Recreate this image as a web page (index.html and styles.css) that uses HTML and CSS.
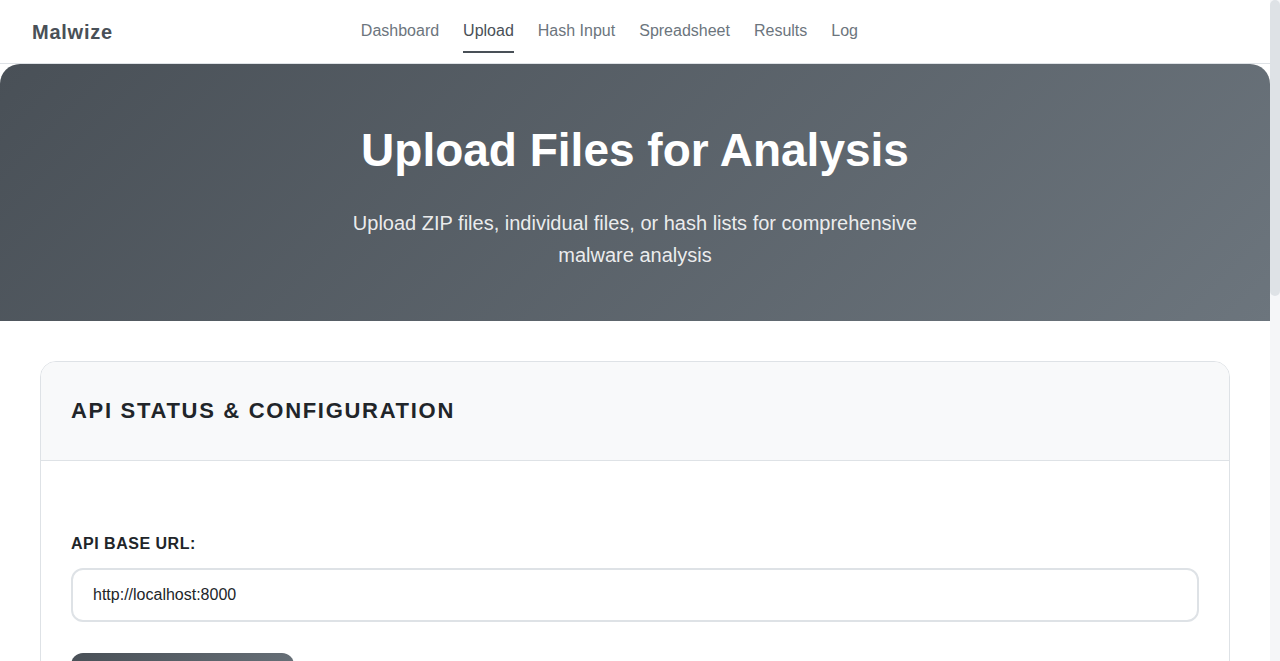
FILE: index.html
```html
<!DOCTYPE html>
<html lang="en">
<head>
<meta charset="utf-8">
<title>Malwize - Upload</title>
<link rel="stylesheet" href="styles.css">
</head>
<body>
<div class="page">
<header class="navbar">
  <div class="brand">Malwize</div>
  <nav class="nav">
    <a class="nav-link" href="#">Dashboard</a>
    <a class="nav-link active" href="#">Upload</a>
    <a class="nav-link" href="#">Hash Input</a>
    <a class="nav-link" href="#">Spreadsheet</a>
    <a class="nav-link" href="#">Results</a>
    <a class="nav-link" href="#">Log</a>
  </nav>
</header>
<section class="hero">
  <h1 class="hero-title">Upload Files for Analysis</h1>
  <p class="hero-sub">Upload ZIP files, individual files, or hash lists for comprehensive malware analysis</p>
</section>
<main class="content">
  <section class="card">
    <div class="card-header">
      <h2 class="card-title">API STATUS &amp; CONFIGURATION</h2>
    </div>
    <div class="card-body">
      <label class="field-label" for="api">API BASE URL:</label>
      <input id="api" class="field-input" type="text" value="http://localhost:8000">
      <button class="btn">Check API Status</button>
    </div>
  </section>
  <section class="card">
    <div class="card-header">
      <h2 class="card-title">UPLOAD FILES</h2>
    </div>
    <div class="card-body">
      <div class="dropzone">Drag &amp; drop files here, or click to browse</div>
    </div>
  </section>
</main>
</div>
<div class="scrollbar" aria-hidden="true"><div class="scrollbar-thumb"></div></div>
</body>
</html>
```
FILE: styles.css
```css
html, body { margin: 0; padding: 0; }
body {
  font-family: "Liberation Sans", Arial, sans-serif;
  color: #212529;
  background: #ffffff;
  display: flex;
  align-items: flex-start;
}

.page {
  flex: 1;
  min-width: 0;
}
.scrollbar {
  flex: 0 0 10px;
  width: 10px;
  height: 100vh;
  background: #f5f6f8;
}
.scrollbar-thumb {
  height: 296px;
  background: #dee2e6;
  border-radius: 5px;
}

.navbar {
  height: 63px;
  border-bottom: 1px solid #dee2e6;
  display: flex;
  align-items: flex-start;
  padding: 0 32px;
}
.brand {
  font-size: 20px;
  font-weight: 700;
  letter-spacing: 0.75px;
  color: #495057;
  padding-top: 21px;
  line-height: 23px;
}
.nav {
  display: flex;
  gap: 24px;
  margin-left: 248px;
}
.nav-link {
  display: block;
  font-size: 16px;
  line-height: 18px;
  color: #6c757d;
  text-decoration: none;
  padding: 22px 0 11px;
  border-bottom: 2px solid transparent;
}
.nav-link.active {
  color: #495057;
  border-bottom-color: #495057;
}

.hero {
  background: linear-gradient(135deg, #495057 0%, #6c757d 100%);
  border-radius: 20px 20px 0 0;
  padding: 59px 20px 50px;
  text-align: center;
  color: #ffffff;
}
.hero-title {
  margin: 0 0 29px;
  font-size: 46px;
  line-height: 55px;
  font-weight: 700;
}
.hero-sub {
  margin: 0 auto;
  max-width: 600px;
  font-size: 20px;
  line-height: 32px;
  color: rgba(255, 255, 255, 0.9);
}

.content {
  padding: 40px;
  display: flex;
  flex-direction: column;
  gap: 40px;
}
.card {
  border: 1px solid #dee2e6;
  border-radius: 16px;
  overflow: hidden;
  background: #ffffff;
}
.card-header {
  background: #f8f9fa;
  border-bottom: 1px solid #dee2e6;
  padding: 36px 30px;
}
.card-title {
  margin: 0;
  font-size: 22px;
  line-height: 26px;
  font-weight: 700;
  letter-spacing: 1.7px;
  color: #212529;
}
.card-body {
  padding: 73px 30px 30px;
  display: flex;
  flex-direction: column;
  align-items: flex-start;
}
.field-label {
  font-size: 16px;
  line-height: 19px;
  font-weight: 700;
  letter-spacing: 0.5px;
  color: #212529;
  margin-bottom: 15px;
}
.field-input {
  box-sizing: border-box;
  width: 100%;
  height: 54px;
  padding: 0 20px;
  border: 2px solid #dee2e6;
  border-radius: 12px;
  font-family: "Liberation Sans", Arial, sans-serif;
  font-size: 16px;
  color: #212529;
  background: #ffffff;
  outline: none;
}
.btn {
  margin-top: 31px;
  width: 223px;
  height: 52px;
  border: none;
  border-radius: 12px;
  background: linear-gradient(135deg, #495057 0%, #6c757d 100%);
  color: #ffffff;
  font-family: "Liberation Sans", Arial, sans-serif;
  font-size: 16px;
  font-weight: 700;
  letter-spacing: 0.5px;
}
.dropzone {
  box-sizing: border-box;
  width: 100%;
  height: 460px;
  border: 2px dashed #dee2e6;
  border-radius: 16px;
  display: flex;
  align-items: center;
  justify-content: center;
  color: #6c757d;
  font-size: 18px;
}
```
